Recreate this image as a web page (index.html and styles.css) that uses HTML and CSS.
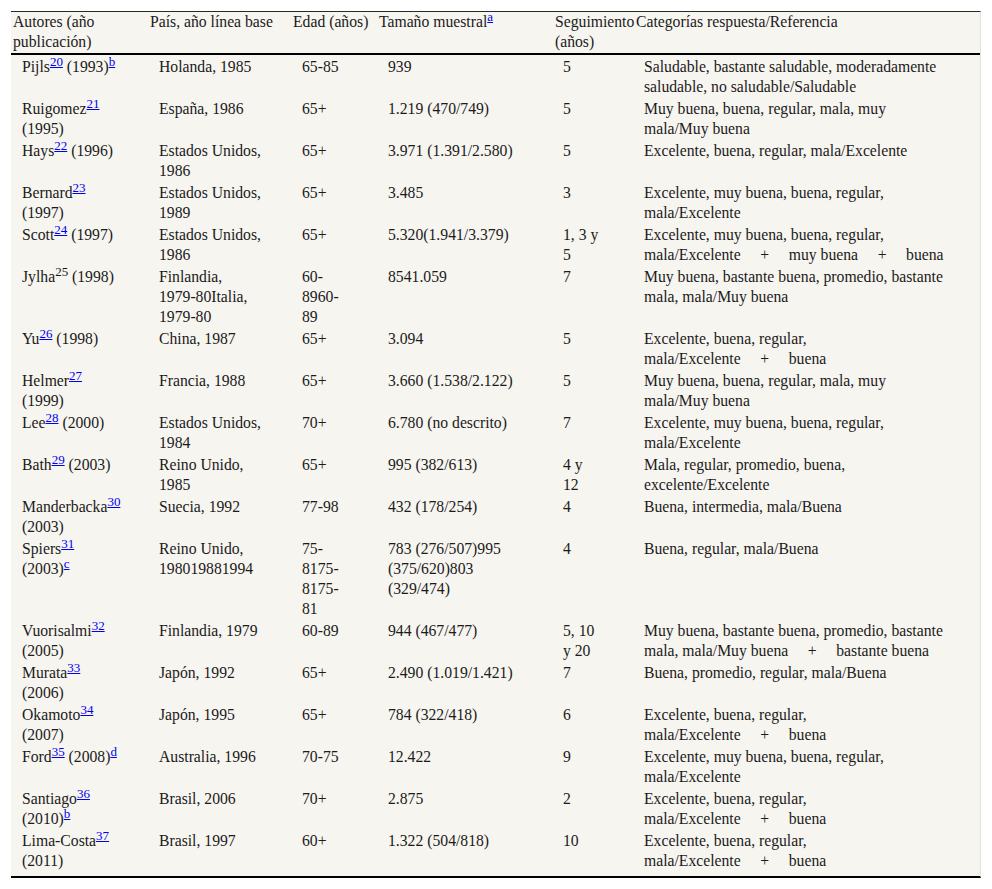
FILE: index.html
```html
<!DOCTYPE html>
<html lang="es">
<head>
<meta charset="utf-8">
<title>Tabla</title>
<link rel="stylesheet" href="styles.css">
</head>
<body>
<table class="data">
  <colgroup>
    <col class="w1"><col class="w2"><col class="w3"><col class="w4"><col class="w5"><col class="w6">
  </colgroup>
  <thead>
    <tr>
      <th>Autores (año publicación)</th>
      <th>País, año línea base</th>
      <th>Edad (años)</th>
      <th>Tamaño muestral<sup><a href="#">a</a></sup></th>
      <th>Seguimiento (años)</th>
      <th>Categorías respuesta/Referencia</th>
    </tr>
  </thead>
  <tbody>
    <tr>
      <td>Pijls<sup><a href="#">20</a></sup> (1993)<sup><a href="#">b</a></sup></td>
      <td>Holanda, 1985</td>
      <td>65-85</td>
      <td>939</td>
      <td>5</td>
      <td>Saludable, bastante saludable, moderadamente saludable, no saludable/Saludable</td>
    </tr>
    <tr>
      <td>Ruigomez<sup><a href="#">21</a></sup> (1995)</td>
      <td>España, 1986</td>
      <td>65+</td>
      <td>1.219 (470/749)</td>
      <td>5</td>
      <td>Muy buena, buena, regular, mala, muy mala/Muy buena</td>
    </tr>
    <tr>
      <td>Hays<sup><a href="#">22</a></sup> (1996)</td>
      <td>Estados Unidos, 1986</td>
      <td>65+</td>
      <td>3.971 (1.391/2.580)</td>
      <td>5</td>
      <td>Excelente, buena, regular, mala/Excelente</td>
    </tr>
    <tr>
      <td>Bernard<sup><a href="#">23</a></sup> (1997)</td>
      <td>Estados Unidos, 1989</td>
      <td>65+</td>
      <td>3.485</td>
      <td>3</td>
      <td>Excelente, muy buena, buena, regular, mala/Excelente</td>
    </tr>
    <tr>
      <td>Scott<sup><a href="#">24</a></sup> (1997)</td>
      <td>Estados Unidos, 1986</td>
      <td>65+</td>
      <td>5.320(1.941/3.379)</td>
      <td>1, 3 y 5</td>
      <td>Excelente, muy buena, buena, regular, mala/Excelente&nbsp;&nbsp;&nbsp;&nbsp;&nbsp;+&nbsp;&nbsp;&nbsp;&nbsp;&nbsp;muy&nbsp;buena&nbsp;&nbsp;&nbsp;&nbsp;&nbsp;+&nbsp;&nbsp;&nbsp;&nbsp;&nbsp;buena</td>
    </tr>
    <tr>
      <td>Jylha<sup>25</sup> (1998)</td>
      <td>Finlandia, <span class="nw">1979-80Italia,</span> <span class="nw">1979-80</span></td>
      <td>60-<br>8960-<br>89</td>
      <td>8541.059</td>
      <td>7</td>
      <td>Muy buena, bastante buena, promedio, bastante mala, mala/Muy buena</td>
    </tr>
    <tr>
      <td>Yu<sup><a href="#">26</a></sup> (1998)</td>
      <td>China, 1987</td>
      <td>65+</td>
      <td>3.094</td>
      <td>5</td>
      <td>Excelente, buena, regular, mala/Excelente&nbsp;&nbsp;&nbsp;&nbsp;&nbsp;+&nbsp;&nbsp;&nbsp;&nbsp;&nbsp;buena</td>
    </tr>
    <tr>
      <td>Helmer<sup><a href="#">27</a></sup> (1999)</td>
      <td>Francia, 1988</td>
      <td>65+</td>
      <td>3.660 (1.538/2.122)</td>
      <td>5</td>
      <td>Muy buena, buena, regular, mala, muy mala/Muy buena</td>
    </tr>
    <tr>
      <td>Lee<sup><a href="#">28</a></sup> (2000)</td>
      <td>Estados Unidos, 1984</td>
      <td>70+</td>
      <td>6.780 (no descrito)</td>
      <td>7</td>
      <td>Excelente, muy buena, buena, regular, mala/Excelente</td>
    </tr>
    <tr>
      <td>Bath<sup><a href="#">29</a></sup> (2003)</td>
      <td>Reino Unido, 1985</td>
      <td>65+</td>
      <td>995 (382/613)</td>
      <td>4 y 12</td>
      <td>Mala, regular, promedio, buena, excelente/Excelente</td>
    </tr>
    <tr>
      <td>Manderbacka<sup><a href="#">30</a></sup> (2003)</td>
      <td>Suecia, 1992</td>
      <td>77-98</td>
      <td>432 (178/254)</td>
      <td>4</td>
      <td>Buena, intermedia, mala/Buena</td>
    </tr>
    <tr>
      <td>Spiers<sup><a href="#">31</a></sup> (2003)<sup><a href="#">c</a></sup></td>
      <td>Reino Unido, 198019881994</td>
      <td>75-<br>8175-<br>8175-<br>81</td>
      <td>783 (276/507)995 (375/620)803 (329/474)</td>
      <td>4</td>
      <td>Buena, regular, mala/Buena</td>
    </tr>
    <tr>
      <td>Vuorisalmi<sup><a href="#">32</a></sup> (2005)</td>
      <td>Finlandia, 1979</td>
      <td>60-89</td>
      <td>944 (467/477)</td>
      <td>5, 10 y 20</td>
      <td>Muy buena, bastante buena, promedio, bastante mala, mala/Muy&nbsp;buena&nbsp;&nbsp;&nbsp;&nbsp;&nbsp;+&nbsp;&nbsp;&nbsp;&nbsp;&nbsp;bastante&nbsp;buena</td>
    </tr>
    <tr>
      <td>Murata<sup><a href="#">33</a></sup> (2006)</td>
      <td>Japón, 1992</td>
      <td>65+</td>
      <td>2.490 (1.019/1.421)</td>
      <td>7</td>
      <td>Buena, promedio, regular, mala/Buena</td>
    </tr>
    <tr>
      <td>Okamoto<sup><a href="#">34</a></sup> (2007)</td>
      <td>Japón, 1995</td>
      <td>65+</td>
      <td>784 (322/418)</td>
      <td>6</td>
      <td>Excelente, buena, regular, mala/Excelente&nbsp;&nbsp;&nbsp;&nbsp;&nbsp;+&nbsp;&nbsp;&nbsp;&nbsp;&nbsp;buena</td>
    </tr>
    <tr>
      <td>Ford<sup><a href="#">35</a></sup> (2008)<sup><a href="#">d</a></sup></td>
      <td>Australia, 1996</td>
      <td>70-75</td>
      <td>12.422</td>
      <td>9</td>
      <td>Excelente, muy buena, buena, regular, mala/Excelente</td>
    </tr>
    <tr>
      <td>Santiago<sup><a href="#">36</a></sup> (2010)<sup><a href="#">b</a></sup></td>
      <td>Brasil, 2006</td>
      <td>70+</td>
      <td>2.875</td>
      <td>2</td>
      <td>Excelente, buena, regular, mala/Excelente&nbsp;&nbsp;&nbsp;&nbsp;&nbsp;+&nbsp;&nbsp;&nbsp;&nbsp;&nbsp;buena</td>
    </tr>
    <tr class="last">
      <td>Lima-Costa<sup><a href="#">37</a></sup> (2011)</td>
      <td>Brasil, 1997</td>
      <td>60+</td>
      <td>1.322 (504/818)</td>
      <td>10</td>
      <td>Excelente, buena, regular, mala/Excelente&nbsp;&nbsp;&nbsp;&nbsp;&nbsp;+&nbsp;&nbsp;&nbsp;&nbsp;&nbsp;buena</td>
    </tr>
  </tbody>
</table>
</body>
</html>
```

FILE: styles.css
```css
html, body {
  margin: 0;
  padding: 0;
  background: #ffffff;
}

body {
  font-family: "Liberation Serif", "Times New Roman", serif;
  font-size: 15.7px;
  color: #1b1b1b;
}

.data {
  margin: 11px 0 0 11px;
  width: 970px;
  table-layout: fixed;
  border-collapse: separate;
  border-spacing: 0;
  background: #f7f5f0;
  border-top: 1px solid #2a2a2a;
  border-bottom: 2px solid #000;
  border-right: 1px solid #e4e2dc;
  line-height: 20px;
}

.w1 { width: 137px; }
.w2 { width: 143px; }
.w3 { width: 86px; }
.w4 { width: 176px; }
.w5 { width: 81px; }
.w6 { width: 346px; }

.data th {
  text-align: left;
  font-weight: normal;
  vertical-align: top;
  padding: 0 0 1px 2px;
  border-bottom: 2px solid #000;
}

.data td {
  vertical-align: top;
  padding: 2px 20px 0 11px;
}

.data td:nth-child(1) { padding-right: 27px; }
.data td:nth-child(2) { padding-right: 20px; }
.data td:nth-child(3) { padding-right: 28px; }
.data td:nth-child(4) { padding-right: 23px; }
.data td:nth-child(5) { padding-left: 10px; padding-right: 34px; }
.data td:nth-child(6) { padding-left: 10px; padding-right: 30px; }

.data tr.last td {
  padding-bottom: 5px;
}

sup {
  font-size: 13px;
  line-height: 0;
  vertical-align: super;
}

a {
  color: #0000ee;
  text-decoration: underline;
}

.nw {
  white-space: nowrap;
}
```
